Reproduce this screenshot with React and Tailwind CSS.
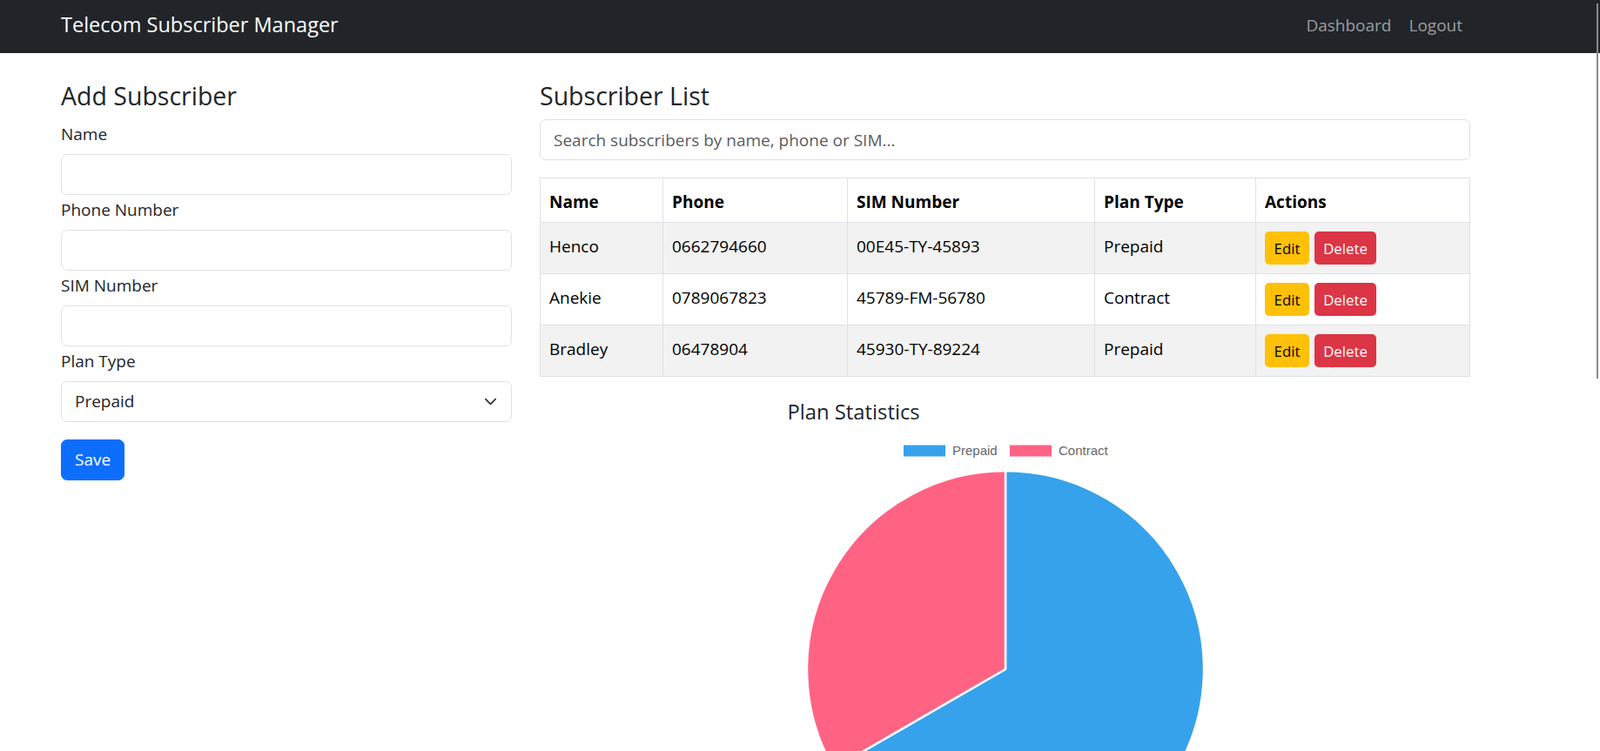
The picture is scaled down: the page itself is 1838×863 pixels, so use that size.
import { useState } from 'react';

const subscribers = [
  { name: 'Henco', phone: '0662794660', sim: '00E45-TY-45893', plan: 'Prepaid' },
  { name: 'Anekie', phone: '0789067823', sim: '45789-FM-56780', plan: 'Contract' },
  { name: 'Bradley', phone: '06478904', sim: '45930-TY-89224', plan: 'Prepaid' },
];

const inputClass =
  'block w-full h-[47px] px-[15px] border border-[#dee2e6] rounded-[7px] bg-white text-[19px] text-[#212529] outline-none';

function Field({ label, children }) {
  return (
    <div>
      <label className="block text-[19px] leading-[30px] pt-[2px] mb-[8px]">{label}</label>
      {children}
    </div>
  );
}

function PlanChart() {
  // center (250, 271), r 228; prepaid 2/3 from 12 o'clock clockwise
  const cx = 250;
  const cy = 271;
  const r = 228;
  const end = [cx + r * Math.cos((150 * Math.PI) / 180), cy + r * Math.sin((150 * Math.PI) / 180)];
  return (
    <svg width="500" height="500" viewBox="0 0 500 500" className="block">
      <rect x="133" y="13.5" width="48" height="13" fill="#36a2eb" />
      <text x="189" y="24.5" fontSize="15" fill="#666" fontFamily="Liberation Sans, Arial, sans-serif">
        Prepaid
      </text>
      <rect x="255" y="13.5" width="48" height="13" fill="#ff6384" />
      <text x="311" y="24.5" fontSize="15" fill="#666" fontFamily="Liberation Sans, Arial, sans-serif">
        Contract
      </text>
      <path
        d={`M${cx} ${cy} L${cx} ${cy - r} A${r} ${r} 0 1 1 ${end[0]} ${end[1]} Z`}
        fill="#36a2eb"
        stroke="#fff"
        strokeWidth="2.5"
        strokeLinejoin="round"
      />
      <path
        d={`M${cx} ${cy} L${end[0]} ${end[1]} A${r} ${r} 0 0 1 ${cx} ${cy - r} Z`}
        fill="#ff6384"
        stroke="#fff"
        strokeWidth="2.5"
        strokeLinejoin="round"
      />
    </svg>
  );
}

export default function App() {
  const [form, setForm] = useState({ name: '', phone: '', sim: '', plan: 'Prepaid' });
  const [search, setSearch] = useState('');

  const set = (field, value) => setForm({ ...form, [field]: value });

  return (
    <div className="relative h-screen overflow-hidden bg-white font-['Open_Sans',sans-serif] text-[#212529]">
      <nav className="h-[61px] bg-[#212529]">
        <div className="ml-[70px] w-[1620px] flex justify-between items-start">
          <span className="mt-[10px] text-[23.5px] leading-[37px] text-white">Telecom Subscriber Manager</span>
          <div className="flex mt-[14px]">
            <a className="px-[10px] text-[19px] leading-[30px] text-[#9b9c9e]">Dashboard</a>
            <a className="px-[10px] text-[19px] leading-[30px] text-[#9b9c9e]">Logout</a>
          </div>
        </div>
      </nav>

      <div className="flex gap-[32px] pl-[70px] pt-[31px]">
        <div className="w-[518px]">
          <h4 className="text-[28.5px] leading-[36px] mb-[9px]">Add Subscriber</h4>
          <Field label="Name">
            <input className={inputClass} value={form.name} onChange={(e) => set('name', e.target.value)} />
          </Field>
          <Field label="Phone Number">
            <input className={inputClass} value={form.phone} onChange={(e) => set('phone', e.target.value)} />
          </Field>
          <Field label="SIM Number">
            <input className={inputClass} value={form.sim} onChange={(e) => set('sim', e.target.value)} />
          </Field>
          <Field label="Plan Type">
            <div className="relative">
              <select
                className={inputClass + ' appearance-none'}
                value={form.plan}
                onChange={(e) => set('plan', e.target.value)}
              >
                <option>Prepaid</option>
                <option>Contract</option>
              </select>
              <svg
                className="absolute right-[17px] top-[16px] w-[15px] h-[15px] pointer-events-none"
                viewBox="0 0 16 16"
                fill="none"
                stroke="#343a40"
                strokeWidth="2"
                strokeLinecap="round"
                strokeLinejoin="round"
              >
                <path d="m2 5 6 6 6-6" />
              </svg>
            </div>
          </Field>
          <button className="mt-[20px] h-[47px] px-[15px] rounded-[7px] border border-[#0d6efd] bg-[#0d6efd] text-white text-[19px]">
            Save
          </button>
        </div>

        <div className="w-[1069px]">
          <h4 className="text-[28.5px] leading-[36px] mb-[9px]">Subscriber List</h4>
          <input
            className={inputClass + ' mb-[20px] placeholder:text-[#595c5f]'}
            placeholder="Search subscribers by name, phone or SIM..."
            value={search}
            onChange={(e) => setSearch(e.target.value)}
          />
          <table className="w-full table-fixed border-collapse text-[19px] leading-[30px] text-black">
            <colgroup>
              <col className="w-[141px]" />
              <col className="w-[212px]" />
              <col className="w-[284px]" />
              <col className="w-[185px]" />
              <col />
            </colgroup>
            <thead>
              <tr>
                {['Name', 'Phone', 'SIM Number', 'Plan Type', 'Actions'].map((h) => (
                  <th
                    key={h}
                    className="border border-[#dee2e6] px-[10px] pt-[12px] pb-[8px] text-left font-bold align-bottom"
                  >
                    {h}
                  </th>
                ))}
              </tr>
            </thead>
            <tbody>
              {subscribers.map((s, i) => (
                <tr key={s.sim} className={i % 2 === 0 ? 'bg-[#f2f2f2]' : 'bg-white'}>
                  <td className="border border-[#dee2e6] px-[10px] pt-[12px] pb-[8px] align-top">{s.name}</td>
                  <td className="border border-[#dee2e6] px-[10px] pt-[12px] pb-[8px] align-top">{s.phone}</td>
                  <td className="border border-[#dee2e6] px-[10px] pt-[12px] pb-[8px] align-top">{s.sim}</td>
                  <td className="border border-[#dee2e6] px-[10px] pt-[12px] pb-[8px] align-top">{s.plan}</td>
                  <td className="border border-[#dee2e6] p-[10px] align-middle">
                    <div className="flex gap-[6px]">
                      <button className="h-[38px] w-[51px] pt-[2px] rounded-[5px] bg-[#ffc107] text-black text-[16.8px]">
                        Edit
                      </button>
                      <button className="h-[38px] w-[71px] pt-[2px] rounded-[5px] bg-[#dc3545] text-white text-[16.8px]">
                        Delete
                      </button>
                    </div>
                  </td>
                </tr>
              ))}
            </tbody>
          </table>

          <div className="w-[500px] mx-auto mt-[25px]">
            <h5 className="text-[23.8px] leading-[30px] mb-[10px]">Plan Statistics</h5>
            <PlanChart />
          </div>
        </div>
      </div>

      <div className="absolute right-[2px] top-[4px] w-[2px] h-[431px] bg-[#8b8b8b]" />
    </div>
  );
}
